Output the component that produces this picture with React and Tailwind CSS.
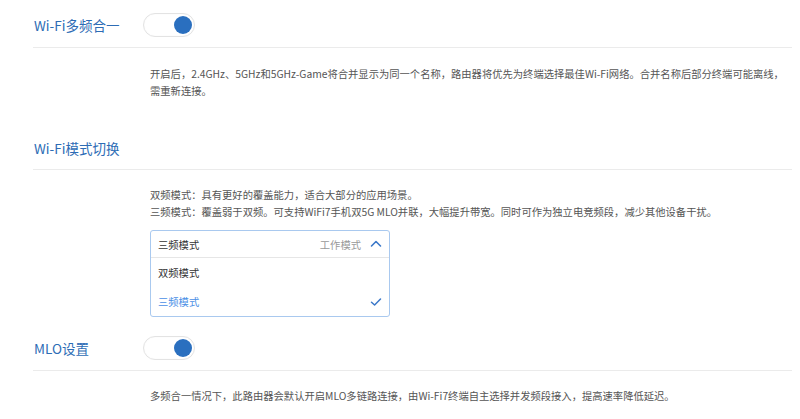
import React from "react";

function Toggle() {
  return (
    <div className="flex h-[24px] w-[52px] items-center justify-end rounded-full border border-[#e3e3e3] bg-white pr-[2px] shadow-[inset_0_0_2px_rgba(0,0,0,0.04)]">
      <div className="h-[18px] w-[18px] rounded-full bg-[#2a6fbf]" />
    </div>
  );
}

function ChevronUp() {
  return (
    <svg width="12" height="12" viewBox="0 0 12 12" fill="none">
      <polyline points="1.5,8 6,3.5 10.5,8" stroke="#3b78c9" strokeWidth="1.6" strokeLinecap="round" strokeLinejoin="round" />
    </svg>
  );
}

function Check() {
  return (
    <svg width="12" height="12" viewBox="0 0 12 12" fill="none">
      <polyline points="1.5,6.2 4.6,9 10.5,3" stroke="#3b78c9" strokeWidth="1.5" strokeLinecap="round" strokeLinejoin="round" />
    </svg>
  );
}

export default function App() {
  const modes = [
    { label: "双频模式", active: false },
    { label: "三频模式", active: true },
  ];

  return (
    <div className="h-[419px] w-[800px] overflow-hidden bg-white font-['Noto_Sans_CJK_SC','Noto_Sans',sans-serif] text-[10.3px] text-[#555]">
      <div className="ml-[33px] mr-[8px]">
        {/* Wi-Fi多频合一 */}
        <div className="flex h-[48px] items-center border-b border-[#ebebeb] pt-[3px]">
          <div className="w-[110px] pl-[1px] text-[13.5px] leading-[20px] text-[#2d6cb5]">Wi-Fi多频合一</div>
          <Toggle />
        </div>
        <div className="whitespace-nowrap pl-[117px] pt-[17px] leading-[17px]">
          <div>开启后，2.4GHz、5GHz和5GHz-Game将合并显示为同一个名称，路由器将优先为终端选择最佳Wi-Fi网络。合并名称后部分终端可能离线，</div>
          <div>需重新连接。</div>
        </div>

        {/* Wi-Fi模式切换 */}
        <div className="border-b border-[#ebebeb] pb-[11px] pl-[1px] pt-[39px] text-[13.5px] leading-[20px] text-[#2d6cb5]">
          Wi-Fi模式切换
        </div>
        <div className="pl-[117px] pt-[16px] leading-[17px]">
          <div>双频模式：具有更好的覆盖能力，适合大部分的应用场景。</div>
          <div>三频模式：覆盖弱于双频。可支持WiFi7手机双5G MLO并联，大幅提升带宽。同时可作为独立电竞频段，减少其他设备干扰。</div>
          <div className="mt-[10px] w-[240px] rounded-[3px] border border-[#a9c9ef] bg-white">
            <div className="flex h-[27px] items-center border-b border-[#e6e6e6] pl-[7px] pr-[7px] text-[#333]">
              <span className="flex-1">三频模式</span>
              <span className="mr-[9px] text-[#999]">工作模式</span>
              <ChevronUp />
            </div>
            {modes.map((m) => (
              <div
                key={m.label}
                className={[
                  "flex h-[29px] items-center pl-[7px] pr-[7px]",
                  m.active ? "text-[#4b8fe6]" : "text-[#333]",
                ].join(" ")}
              >
                <span className="flex-1">{m.label}</span>
                {m.active && <Check />}
              </div>
            ))}
          </div>
        </div>

        {/* MLO设置 */}
        <div className="flex h-[54px] items-center border-b border-[#ebebeb] pt-[9px]">
          <div className="w-[110px] pl-[1px] text-[13.5px] leading-[20px] text-[#2d6cb5]">MLO设置</div>
          <Toggle />
        </div>
        <div className="pl-[117px] pt-[16px] leading-[17px]">
          多频合一情况下，此路由器会默认开启MLO多链路连接，由Wi-Fi7终端自主选择并发频段接入，提高速率降低延迟。
        </div>
      </div>
    </div>
  );
}
